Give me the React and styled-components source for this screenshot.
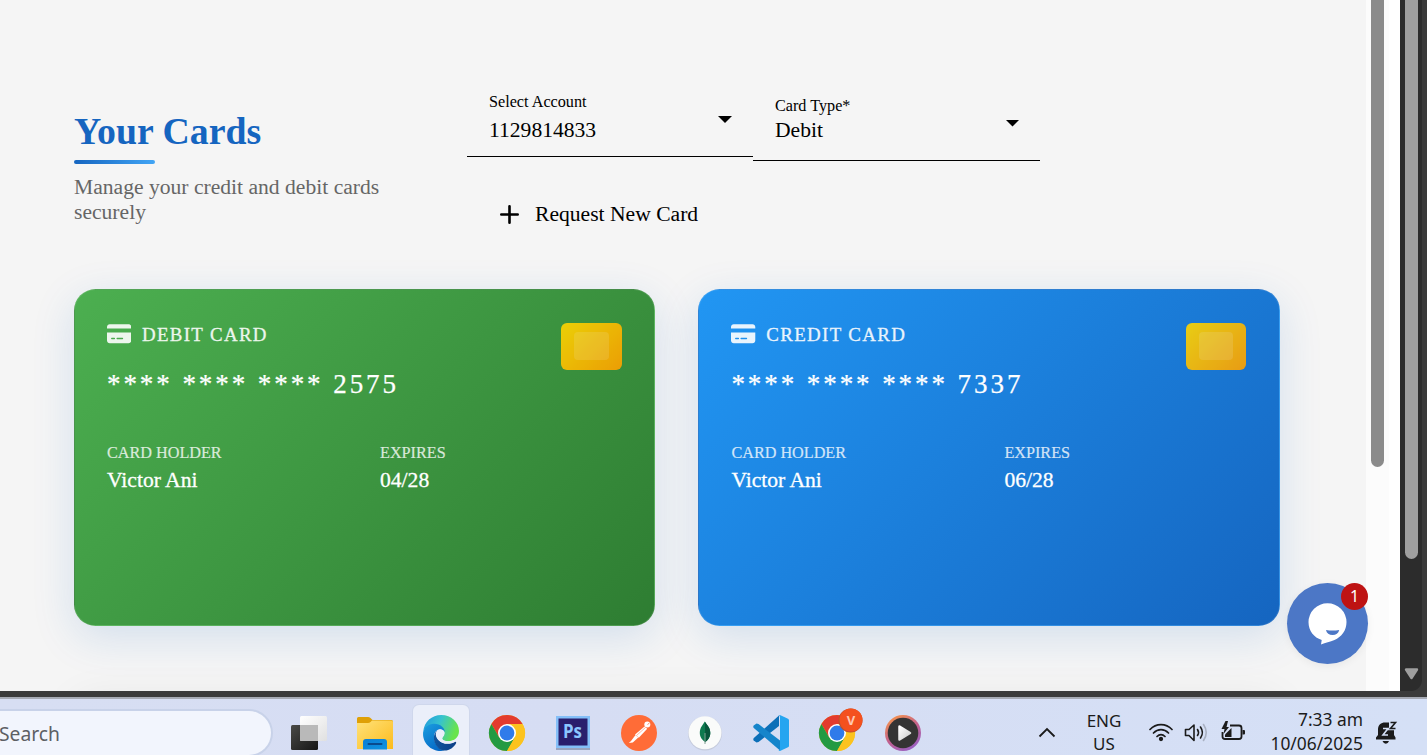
import React from "react";
import styled, { createGlobalStyle } from "styled-components";
import { FaCreditCard } from "react-icons/fa6";

const Global = createGlobalStyle`
  * { box-sizing: border-box; }
  body { margin: 0; background: #3a3a3a; overflow: hidden; }
`;

const Screen = styled.div`
  width: 1427px;
  height: 755px;
  overflow: hidden;
  display: flex;
  flex-direction: column;
  font-family: "Liberation Serif", serif;
`;

/* ---------- browser viewport ---------- */
const Viewport = styled.div`
  position: relative;
  display: flex;
  height: 691px;
  flex: none;
  background: #3a3a3a;
`;

const Page = styled.main`
  width: 1366px;
  height: 691px;
  overflow: hidden;
  background: #f5f5f5;
  padding: 92px 86px 0 74px;
`;

const InnerScroll = styled.div`
  width: 23px;
  background: #fcfcfc;
  padding-left: 5px;
`;

const Gutter = styled.div`
  width: 11px;
  background: #fff;
`;

const OuterScroll = styled.div`
  width: 22px;
  background: #2c2c2c;
  padding-left: 5px;
  border-radius: 0 0 11px 0;
  display: flex;
  flex-direction: column;
`;

const Thumb = styled.div`
  width: 13px;
  height: ${(p) => p.$h}px;
  background: ${(p) => p.$c};
  border-radius: 0 0 7px 7px;
`;

const DownArrow = styled.svg`
  width: 15px;
  height: 12px;
  margin: 109px 0 0 -1px;
`;

/* ---------- header ---------- */
const Header = styled.header`
  display: flex;
  height: 197px;
`;

const Intro = styled.div`
  width: 393px;
  padding-top: 17px;
`;

const Title = styled.h1`
  margin: 0;
  font-size: 37.8px;
  line-height: 44px;
  font-weight: 700;
  color: #1565c0;
`;

const TitleBar = styled.div`
  width: 81px;
  height: 4px;
  margin-top: 7px;
  border-radius: 3px;
  background: linear-gradient(90deg, #1565c0, #42a5f5);
`;

const Subtitle = styled.p`
  margin: 11px 0 0;
  width: 340px;
  font-size: 21.6px;
  line-height: 25px;
  color: #666;
`;

const Selects = styled.div`
  display: flex;
  align-items: flex-start;
`;

const Field = styled.div`
  width: ${(p) => p.$w}px;
  height: ${(p) => p.$h}px;
  padding: ${(p) => p.$top}px 21px 0 22px;
  border-bottom: 1px solid #000;
  display: flex;
  justify-content: space-between;
`;

const FieldText = styled.div`
  display: flex;
  flex-direction: column;
  gap: ${(p) => p.$gap}px;
`;

const FieldLabel = styled.span`
  font-size: 16.2px;
  line-height: 18px;
`;

const FieldValue = styled.span`
  font-size: 21.6px;
  line-height: 26px;
`;

const Caret = styled.svg`
  width: ${(p) => p.$w}px;
  height: ${(p) => p.$w / 2}px;
  margin-top: ${(p) => p.$mt}px;
`;

const RequestButton = styled.button`
  display: flex;
  align-items: center;
  gap: 16px;
  height: 28px;
  margin-top: 39px;
  padding: 0 33px;
  border: 0;
  background: none;
  font: 21.6px/26px "Liberation Serif", serif;
  color: #000;
  svg { width: 19px; height: 19px; }
`;

/* ---------- bank cards ---------- */
const Cards = styled.section`
  display: grid;
  grid-template-columns: 581.3px 581.3px;
  gap: 43.1px;
`;

const BankCard = styled.article`
  height: 337px;
  padding: 32px 32.4px 32px 32px;
  border: 1px solid rgba(255, 255, 255, 0.1);
  border-radius: 21.6px;
  color: #fff;
  background: linear-gradient(135deg, ${(p) => p.$from} 0%, ${(p) => p.$to} 100%);
  box-shadow: 0 11px 43px rgba(21, 101, 192, 0.15);
  display: flex;
  justify-content: space-between;
`;

const CardBody = styled.div`
  display: flex;
  flex-direction: column;
`;

const CardKind = styled.div`
  display: flex;
  align-items: center;
  gap: 10.6px;
  height: 24px;
  font-size: 18.9px;
  line-height: 24px;
  letter-spacing: 1.35px;
  opacity: 0.9;
  -webkit-text-stroke: 0.3px #fff;
  span { padding-top: 1px; }
  svg { width: 24.3px; height: 21.6px; }
`;

const CardNumber = styled.div`
  margin-top: 22px;
  font-size: 27px;
  line-height: 32px;
  letter-spacing: 2.93px;
  white-space: nowrap;
  -webkit-text-stroke: 0.25px #fff;
`;

const CardDetails = styled.dl`
  display: grid;
  grid-template-columns: 273px 100px;
  margin: 43px 0 0;
`;

const DetailLabel = styled.dt`
  font-size: 16.2px;
  line-height: 20px;
  opacity: 0.8;
  -webkit-text-stroke: 0.15px #fff;
`;

const DetailValue = styled.dd`
  margin: 3px 0 0;
  font-size: 21.6px;
  line-height: 28px;
  -webkit-text-stroke: 0.3px #fff;
`;

const Chip = styled.div`
  width: 60.5px;
  height: 47px;
  margin-top: 1px;
  padding: 9px 13px;
  border-radius: 6px;
  opacity: 0.9;
  background: linear-gradient(135deg, #ffd700, #ffa000);
`;

const ChipCore = styled.div`
  height: 28px;
  border-radius: 4px;
  background: rgba(255, 255, 255, 0.13);
`;

const NextPanel = styled.section`
  height: 120px;
  margin-top: 69px;
  border-radius: 16px;
  background: #fff;
  box-shadow: 0 5px 43px rgba(0, 0, 0, 0.07);
`;

/* ---------- chat launcher ---------- */
const Chat = styled.div`
  position: absolute;
  left: 1287px;
  top: 583px;
  width: 81px;
  height: 81px;
  border-radius: 50%;
  background: #4c77c6;
  box-shadow: 0 2px 8px rgba(0, 0, 0, 0.06);
  svg { display: block; width: 81px; height: 81px; }
`;

const Unread = styled.span`
  position: absolute;
  right: 0;
  top: 0;
  width: 27px;
  height: 27px;
  border-radius: 50%;
  background: #be1313;
  color: #fff;
  font: 16px/26px "Noto Sans", sans-serif;
  text-align: center;
`;

/* ---------- taskbar ---------- */
const WindowEdge = styled.div`
  height: 8px;
  flex: none;
  background: #3b3b3b;
  border-bottom: 2px solid #a7abb5;
`;

const Taskbar = styled.footer`
  display: flex;
  height: 56px;
  overflow: hidden;
  background: linear-gradient(90deg, #d7def3 0%, #d6ddf3 40%, #d5e0f6 100%);
  font-family: "Noto Sans", sans-serif;
  color: #1b1b1b;
`;

const Search = styled.div`
  width: 274px;
  height: 48px;
  margin: 10px 2px 0 -1px;
  flex: none;
  border: 2px solid #c8d2e9;
  border-left: 0;
  border-radius: 0 24px 24px 0;
  background: #f2f5fd;
  color: #5d5f64;
  font-size: 19.3px;
  line-height: 45px;
`;

const Apps = styled.nav`
  display: flex;
  gap: 10px;
  padding: 6px 0 0 6px;
`;

const AppTile = styled.div`
  width: 56px;
  height: 56px;
  padding: 10px;
  border-radius: 6px;
  background: ${(p) => (p.$active ? "#ebeffa" : "transparent")};
  box-shadow: ${(p) => (p.$active ? "0 0 0 1px #cfd7ec" : "none")};
  svg { display: block; width: 36px; height: 36px; overflow: visible; }
`;

const Tray = styled.div`
  display: flex;
  align-items: flex-start;
  margin-left: auto;
  padding: 11px 29px 0 0;
`;

const TrayIcon = styled.svg`
  width: ${(p) => p.$w}px;
  height: 24px;
  margin: 10px ${(p) => p.$mr}px 0 0;
`;

const Language = styled.div`
  width: 36px;
  margin: 0 27px 0 0;
  text-align: center;
  font-size: 17px;
  line-height: 22.5px;
`;

const Clock = styled.div`
  width: 100px;
  margin: -2px 13px 0 0;
  text-align: right;
  font-size: 17.4px;
  line-height: 23.5px;
`;

const DropArrow = ({ w, mt }) => (
  <Caret $w={w} $mt={mt} viewBox="0 0 14 7">
    <path d="M0 0h14L7 7z" />
  </Caret>
);

function PaymentCard({ kind, digits, holder, expires, from, to }) {
  return (
    <BankCard $from={from} $to={to}>
      <CardBody>
        <CardKind>
          <FaCreditCard />
          <span>{kind}</span>
        </CardKind>
        <CardNumber>**** **** **** {digits}</CardNumber>
        <CardDetails>
          <div>
            <DetailLabel>CARD HOLDER</DetailLabel>
            <DetailValue>{holder}</DetailValue>
          </div>
          <div>
            <DetailLabel>EXPIRES</DetailLabel>
            <DetailValue>{expires}</DetailValue>
          </div>
        </CardDetails>
      </CardBody>
      <Chip>
        <ChipCore />
      </Chip>
    </BankCard>
  );
}

const TaskViewIcon = () => (
  <svg viewBox="0 0 36 36">
    <defs>
      <linearGradient id="tvd" x1="0" y1="0" x2="1" y2="1">
        <stop offset="0" stopColor="#4a4a47" />
        <stop offset="1" stopColor="#161616" />
      </linearGradient>
      <linearGradient id="tvl" x1="0" y1="0" x2="1" y2="1">
        <stop offset="0" stopColor="#fff" />
        <stop offset="1" stopColor="#e0e0e0" />
      </linearGradient>
    </defs>
    <rect y="10" width="27" height="25" rx="1.5" fill="url(#tvd)" />
    <rect x="9" y="1" width="27" height="25" rx="1.5" fill="url(#tvl)" />
    <path d="M9 10h18v16H10.500Q9 26 9 24.500z" fill="#b9b9b9" />
  </svg>
);

const FolderIcon = () => (
  <svg viewBox="0 0 36 36">
    <defs>
      <linearGradient id="fo" x1="0" y1="0" x2="1" y2="1">
        <stop offset="0" stopColor="#ffe27a" />
        <stop offset="1" stopColor="#fcbb1c" />
      </linearGradient>
      <linearGradient id="fb" x1="0" y1="0" x2="1" y2="1">
        <stop offset="0" stopColor="#0a7ed6" />
        <stop offset="1" stopColor="#0f93e0" />
      </linearGradient>
    </defs>
    <path d="M0 3.500Q0 2 1.500 2H11q1.500 0 2.500 1l2 2H34.500Q36 5 36 6.500V12H0z" fill="#dfa006" />
    <path d="M0 8h11q1.500 0 2.500-1l1.500-1.500H34.500Q36 5.500 36 7V34H0z" fill="url(#fo)" />
    <path d="M6 34.500V27q0-3 3-3H27q3 0 3 3V34.500z" fill="url(#fb)" />
    <path d="M11.500 29h13" stroke="#0a4a8d" strokeWidth="2" strokeLinecap="round" />
  </svg>
);

const EdgeIcon = () => (
  <svg viewBox="0 0 256 256">
    <defs>
      <linearGradient id="ed1" x1="0" y1="0" x2="1" y2="0.300">
        <stop offset="0" stopColor="#1f97df" />
        <stop offset="0.500" stopColor="#36c2cf" />
        <stop offset="1" stopColor="#68e44c" />
      </linearGradient>
      <linearGradient id="ed2" x1="0" y1="0" x2="0.600" y2="1">
        <stop offset="0" stopColor="#1b9fe0" />
        <stop offset="1" stopColor="#0669c6" />
      </linearGradient>
      <linearGradient id="ed3" x1="0" y1="0" x2="1" y2="0">
        <stop offset="0" stopColor="#11559d" />
        <stop offset="1" stopColor="#0c3f87" />
      </linearGradient>
    </defs>
    <path d="M2 118C8 48 62 0 130 0c72 0 126 52 126 114 0 44-34 73-77 73-28 0-43-10-43-20 0-9 17-17 17-38 0-28-30-58-75-58C38 71 8 96 2 118z" fill="url(#ed1)" />
    <path d="M1 120C10 88 38 62 78 62c48 0 77 31 77 59-10-16-25-22-38-19-32 7-45 42-36 75 9 38 38 72 73 76C72 270-8 206 1 120z" fill="url(#ed2)" />
    <path d="M103 110c-26 15-32 56-17 91 14 33 39 52 68 52 35 0 67-24 81-52 4-8-3-13-11-9-17 9-34 11-50 11-48 0-80-35-80-67 0-10 4-19 9-26z" fill="url(#ed3)" />
    <path d="M103 110c14-11 37-10 47 8 7 15-3 31-11 39-9 11 2 30 41 30 14 0 29-4 41-11l12 13c-17 12-39 16-59 16-48 0-83-36-83-69 0-10 4-19 12-26z" fill="#ebeffa" />
  </svg>
);

const ChromeArt = () => (
  <g>
    <circle cx="18" cy="18" r="18" fill="#fcc31e" />
    <path d="M2.410 9A18 18 0 0 1 33.590 9H18L10.200 22.500z" fill="#e33b2e" />
    <path d="M2.410 9A18 18 0 0 0 18 36L25.800 22.500 10.200 22.500z" fill="#249a42" />
    <path d="M18 9H33.590A18 18 0 0 1 18 36L25.800 22.500z" fill="#fcc31e" />
    <circle cx="18" cy="18" r="9" fill="#fff" />
    <circle cx="18" cy="18" r="7.400" fill="#2f7bea" />
  </g>
);

const VsCodeIcon = () => (
  <svg viewBox="0 0 36 36">
    <path d="M26 .5V11L5.500 27 3.500 27.500.7 25.500Q-.2 24.200.8 23z" fill="#0b6fb8" />
    <path d="M.8 13Q-.2 11.800.7 10.500L3.500 8.500 5.500 9 27 25.500V35.500z" fill="#1585cb" />
    <path d="M25.500.2Q26.500-.2 27.500.3L35 3.800Q36 4.300 36 5.300V30.700Q36 31.700 35 32.200L27.500 35.700Q26 36.300 25 35.200 27 36 27 33.500V2.500Q27 .3 25.500.2z" fill="#25a5f0" />
  </svg>
);

const PostmanIcon = () => (
  <svg viewBox="0 0 36 36">
    <circle cx="18" cy="18" r="18" fill="#ff6c37" />
    <circle cx="26.300" cy="9.500" r="3" fill="#fff" />
    <path d="M23.500 11.500L14 19.500l3.800 3.200 8.400-9z" fill="#fff" />
    <path d="M14.500 20l-4.500 6-2.200 2 4-.6 5.500-5" fill="#fff" />
    <path d="M15.500 20.500l9-8" stroke="#ff6c37" strokeWidth="0.500" />
    <path d="M26.500 9.500l2-1.500" stroke="#ff6c37" strokeWidth="0.800" />
  </svg>
);

const MongoIcon = () => (
  <svg viewBox="0 0 36 36">
    <circle cx="18" cy="18.500" r="17" fill="#c5cbdc" />
    <circle cx="18" cy="17.800" r="16.500" fill="#fafbfa" />
    <path d="M17.800 6.500C19.500 9.500 23.300 12 23.300 18c0 4.500-2.500 7-5 9.200C15.500 25 12.800 22.500 12.800 18c0-5.800 3.500-8.500 5-11.500z" fill="#0d7a4f" />
    <path d="M18 7c1.700 3 5.300 5.300 5.300 11 0 4.500-2.500 7-5 9.200z" fill="#07563b" />
    <path d="M18 18v11" stroke="#7f9f91" strokeWidth="1" />
  </svg>
);

const PsText = styled.text`
  font: 700 19px "Open Sans", sans-serif;
  fill: #8bc6ff;
`;

const ProfileText = styled.text`
  font: 700 13px "Noto Sans", sans-serif;
  fill: #ffc9b3;
  text-anchor: middle;
`;

const PhotoshopIcon = () => (
  <svg viewBox="0 0 36 36">
    <rect x="1" y="3" width="34" height="32" fill="#6f7f9c" opacity="0.600" />
    <rect x="1" y="1" width="34" height="32" fill="#84bff8" />
    <rect x="3.500" y="3.500" width="29" height="27" fill="#291e6d" />
    <PsText x="8" y="23" textLength="19" lengthAdjust="spacingAndGlyphs">Ps</PsText>
  </svg>
);

const MediaIcon = () => (
  <svg viewBox="0 0 36 36">
    <defs>
      <linearGradient id="mp" x1="0.200" y1="0" x2="0.800" y2="1">
        <stop offset="0" stopColor="#f7954a" />
        <stop offset="0.500" stopColor="#c1608e" />
        <stop offset="1" stopColor="#9460c9" />
      </linearGradient>
      <linearGradient id="mt" x1="0" y1="0" x2="1" y2="1">
        <stop offset="0" stopColor="#fff" />
        <stop offset="1" stopColor="#ccc" />
      </linearGradient>
    </defs>
    <circle cx="18" cy="18" r="18" fill="url(#mp)" />
    <circle cx="18" cy="18" r="15.300" fill="#343434" />
    <path d="M14.500 11.500L25 18 14.500 24.500z" fill="url(#mt)" stroke="url(#mt)" strokeWidth="2.500" strokeLinejoin="round" />
  </svg>
);

export default function App() {
  return (
    <Screen>
      <Global />
      <Viewport>
        <Page>
          <Header>
            <Intro>
              <Title>Your Cards</Title>
              <TitleBar />
              <Subtitle>Manage your credit and debit cards securely</Subtitle>
            </Intro>
            <div>
              <Selects>
                <Field $w={286} $h={65} $top={1}>
                  <FieldText $gap={6}>
                    <FieldLabel>Select Account</FieldLabel>
                    <FieldValue>1129814833</FieldValue>
                  </FieldText>
                  <DropArrow w={14} mt={23} />
                </Field>
                <Field $w={287} $h={69} $top={5}>
                  <FieldText $gap={2}>
                    <FieldLabel>Card Type*</FieldLabel>
                    <FieldValue>Debit</FieldValue>
                  </FieldText>
                  <DropArrow w={13} mt={23} />
                </Field>
              </Selects>
              <RequestButton>
                <svg viewBox="0 0 19 19">
                  <path d="M9.500 1.300v16.400M1.300 9.500h16.400" stroke="#000" strokeWidth="2.600" strokeLinecap="round" />
                </svg>
                Request New Card
              </RequestButton>
            </div>
          </Header>
          <Cards>
            <PaymentCard kind="DEBIT CARD" digits="2575" holder="Victor Ani" expires="04/28" from="#4caf50" to="#2e7d32" />
            <PaymentCard kind="CREDIT CARD" digits="7337" holder="Victor Ani" expires="06/28" from="#2196f3" to="#1565c0" />
          </Cards>
          <NextPanel />
        </Page>
        <InnerScroll>
          <Thumb $h={467} $c="#8b8b8b" />
        </InnerScroll>
        <Gutter />
        <OuterScroll>
          <Thumb $h={559} $c="#9f9f9f" />
          <DownArrow viewBox="0 0 15 12">
            <path d="M2 1.500h11L7.500 10z" fill="#9f9f9f" stroke="#9f9f9f" strokeWidth="2.400" strokeLinejoin="round" />
          </DownArrow>
        </OuterScroll>
        <Chat>
          <svg viewBox="0 0 81 81">
            <path d="M40.500 20.300a19 18.800 0 0 1 19 18.800c0 8.500-5 15-12 18-4.500 1.800-9 2.800-13.500 4.400l.7-4.500C27 54.700 21.500 48 21.500 39.100a19 18.800 0 0 1 19-18.800z" fill="#fff" />
            <path d="M39 47q6.600 1.200 13.200 0c-.7 3.200-3.200 5-6.600 5s-6-1.800-6.600-5z" fill="#4c77c6" />
          </svg>
          <Unread>1</Unread>
        </Chat>
      </Viewport>
      <WindowEdge />
      <Taskbar>
        <Search>Search</Search>
        <Apps>
          <AppTile><TaskViewIcon /></AppTile>
          <AppTile><FolderIcon /></AppTile>
          <AppTile $active><EdgeIcon /></AppTile>
          <AppTile><svg viewBox="0 0 36 36"><ChromeArt /></svg></AppTile>
          <AppTile><PhotoshopIcon /></AppTile>
          <AppTile><PostmanIcon /></AppTile>
          <AppTile><MongoIcon /></AppTile>
          <AppTile><VsCodeIcon /></AppTile>
          <AppTile>
            <svg viewBox="0 0 36 36">
              <ChromeArt />
              <circle cx="31.500" cy="5.500" r="12" fill="#b9502e" />
              <circle cx="32" cy="5" r="11.500" fill="#f4511e" />
              <ProfileText x="32" y="9.500">V</ProfileText>
            </svg>
          </AppTile>
          <AppTile><MediaIcon /></AppTile>
        </Apps>
        <Tray>
          <TrayIcon $w={18} $mr={30} viewBox="0 0 18 24" fill="none" stroke="#1b1b1b" strokeWidth="1.800">
            <path d="M1.500 16.500L9 9l7.500 7.500" />
          </TrayIcon>
          <Language>ENG<br />US</Language>
          <TrayIcon $w={24} $mr={11} viewBox="0 0 24 24" fill="none" stroke="#1b1b1b" strokeWidth="1.700" strokeLinecap="round">
            <path d="M1 9.500C7 3 17 3 23 9.500M4.500 13c4.300-4.500 10.700-4.500 15 0M8 16.500c2.400-2.500 5.600-2.500 8 0" />
            <circle cx="12" cy="19" r="1.300" fill="#1b1b1b" />
          </TrayIcon>
          <TrayIcon $w={24} $mr={12} viewBox="0 0 24 24" fill="none" stroke="#1b1b1b" strokeWidth="1.600" strokeLinecap="round" strokeLinejoin="round">
            <path d="M1.500 9.500h3.500L10 5v15.500l-5-5H1.500z" />
            <path d="M13.500 9.500q2 3 0 6M16.500 7q3.800 5.500 0 11" />
            <path d="M19.500 4.500q5.500 8 0 16" stroke="#a9b1c2" />
          </TrayIcon>
          <TrayIcon $w={26} $mr={17} viewBox="0 0 26 24" fill="none" stroke="#1b1b1b" strokeWidth="1.800">
            <path d="M10 5.500h9q2.500 0 2.500 2.500v8.500q0 2.500-2.500 2.500H5q-2.500 0-2.500-2.500V12" />
            <path d="M22.500 10h1.500q1 0 1 1v2.500q0 1-1 1h-1.500z" fill="#1b1b1b" stroke="none" />
            <path d="M5.500 1L1.500 9h3L3.500 14l5.500-7H6.500L8 1z" fill="#1b1b1b" stroke="none" />
            <path d="M5 17V14.500L11.500 8V17z" fill="#1b1b1b" stroke="none" />
          </TrayIcon>
          <Clock>7:33 am<br />10/06/2025</Clock>
          <TrayIcon $w={22} $mr={0} viewBox="0 0 22 24">
            <path d="M0 19.500v-2l2-2.500V9.500C2 5 5 2.500 9 2.500h4v5h5v7.500l1.500 2.500v2z" fill="#1b1b1b" />
            <path d="M6.500 21h6.500q-1 2.700-3.200 2.700t-3.300-2.700z" fill="#1b1b1b" />
            <path d="M7 8.500h5l-5 6.500h5" fill="none" stroke="#d5e0f6" strokeWidth="1.600" />
            <path d="M14.500 2.500h5l-5 6h5" fill="none" stroke="#d5e0f6" strokeWidth="3.400" />
            <path d="M14.500 2.500h5l-5 6h5" fill="none" stroke="#1b1b1b" strokeWidth="1.600" />
          </TrayIcon>
        </Tray>
      </Taskbar>
    </Screen>
  );
}
